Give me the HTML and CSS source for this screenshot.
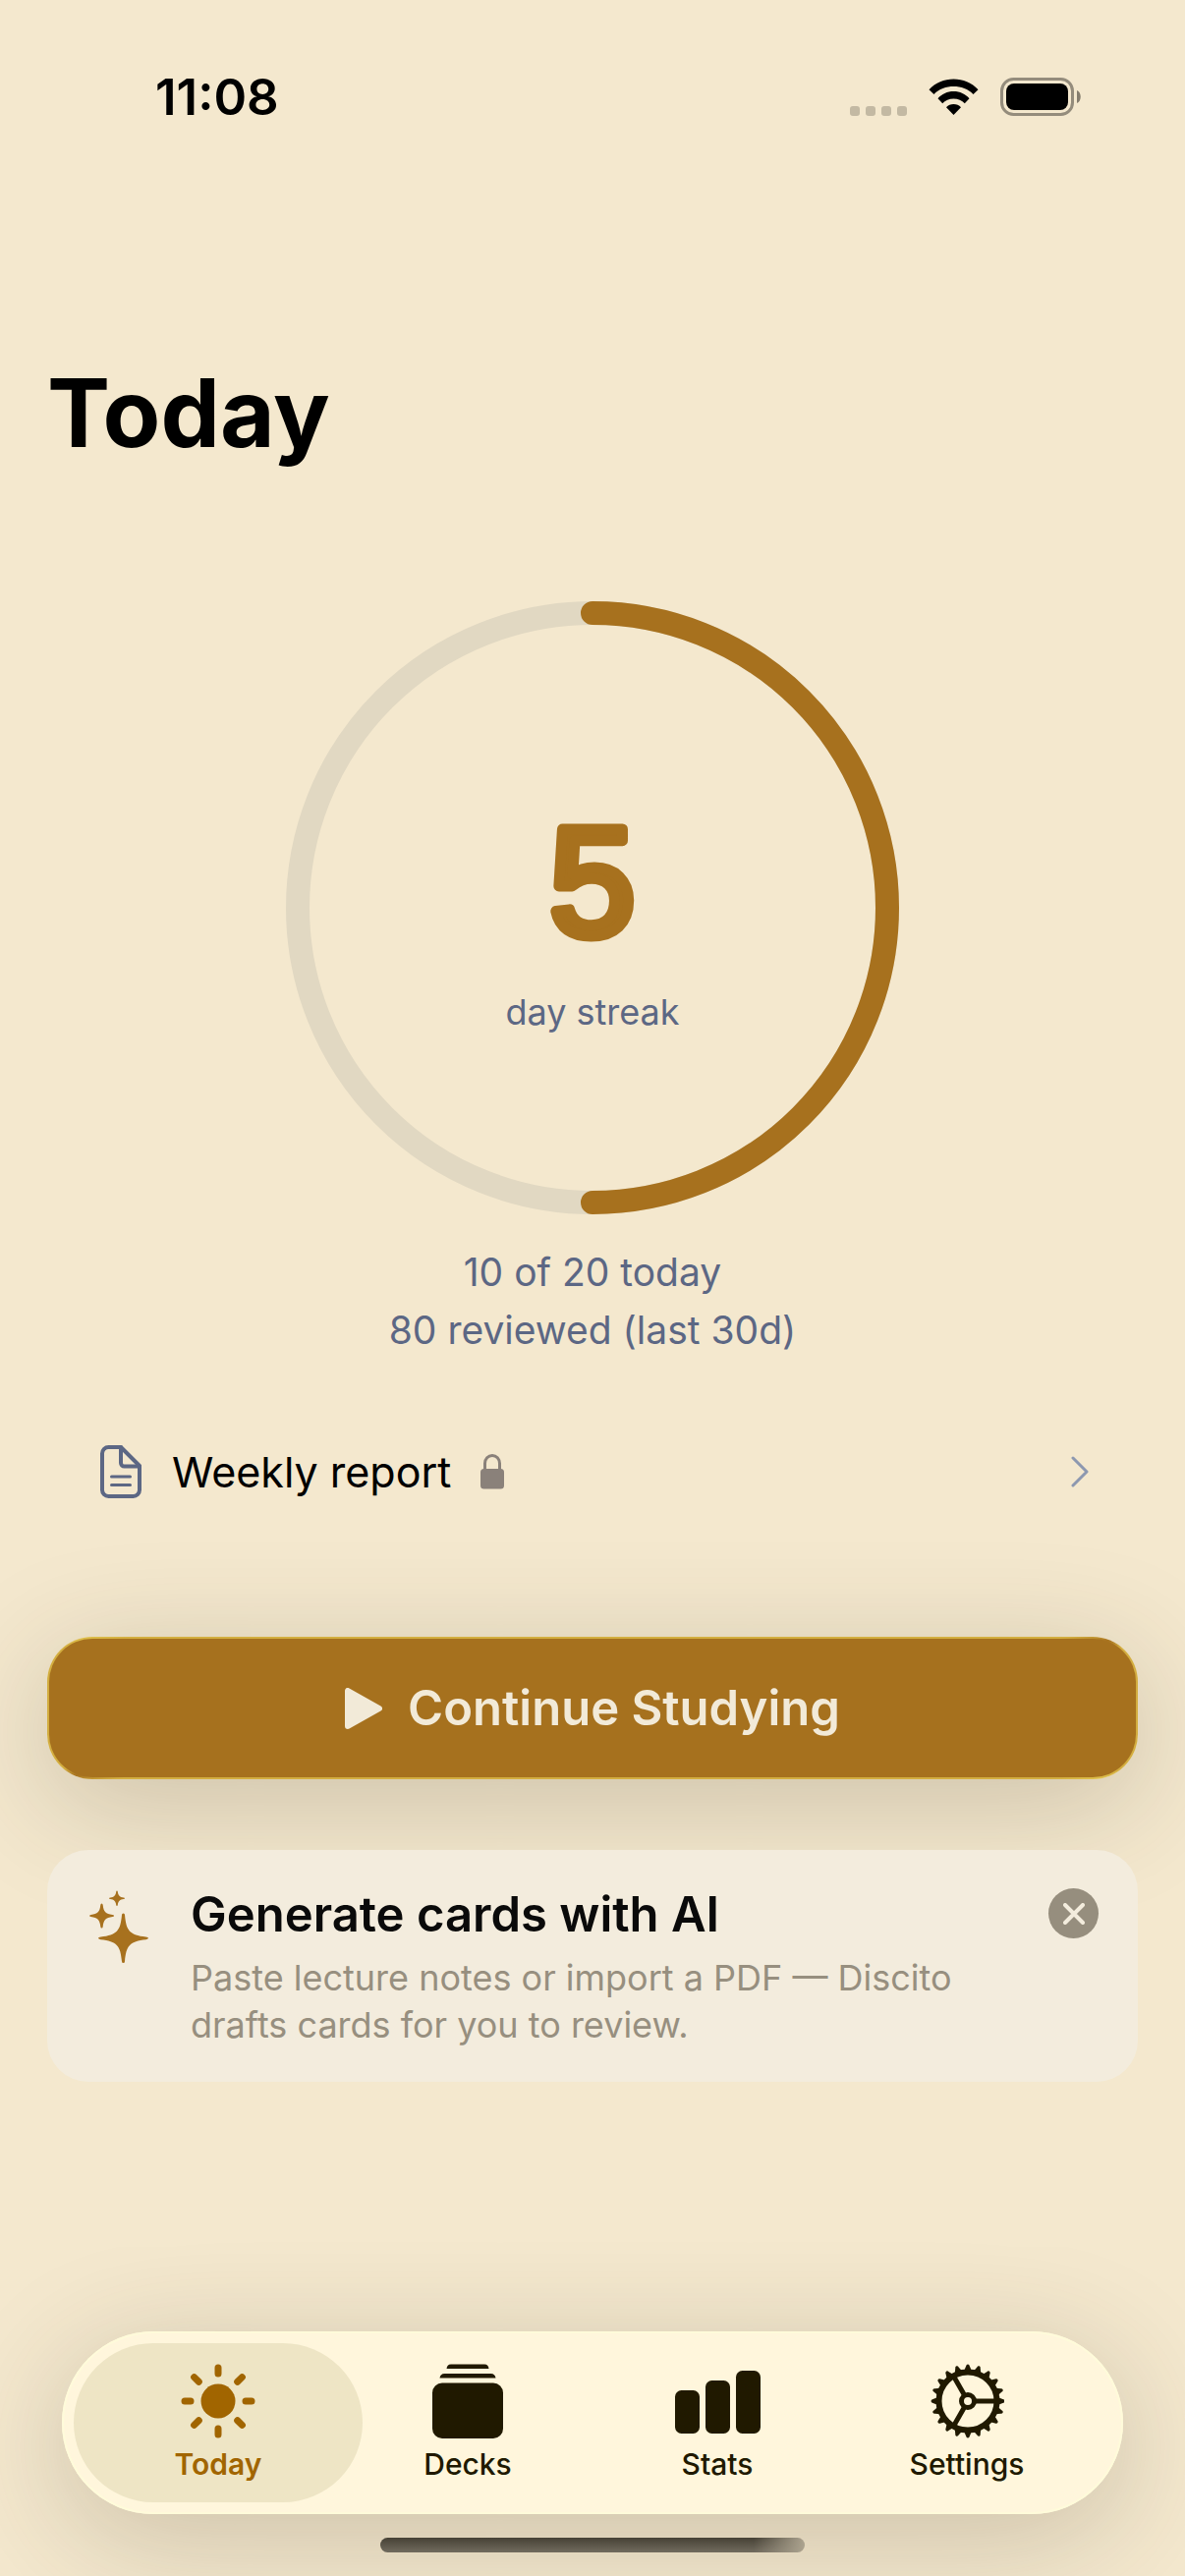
FILE: index.html
```html
<!DOCTYPE html>
<html lang="en">
<head>
  <meta charset="utf-8">
  <meta name="viewport" content="width=device-width">
  <title>Today</title>
  <link rel="stylesheet" href="styles.css">
</head>
<body>
  <header class="status-bar">
    <span class="time">11:08</span>
    <div class="status-icons">
      <svg class="signal" width="58" height="10" viewBox="0 0 58 10">
        <rect width="10" height="10" rx="3"/>
        <rect x="16" width="10" height="10" rx="3"/>
        <rect x="32" width="10" height="10" rx="3"/>
        <rect x="48" width="10" height="10" rx="3"/>
      </svg>
      <svg width="51" height="38" viewBox="0 0 51 38">
        <path d="M0.5 11.2C7 4.200 16 0.500 25.500 0.500S44 4.200 50.500 11.200L45.500 16C40.500 10.500 33 8 25.500 8S10.500 10.500 5.500 16Z"/>
        <path d="M9.500 20.200C13.500 15.700 19 13 25.500 13S37.500 15.700 41.500 20.200L36.800 25.200C34 22.200 30 20.500 25.500 20.500S17 22.200 14.200 25.200Z"/>
        <path d="M18 29.200C20 27 22.500 26 25.500 26S31 27 33 29.200L25.500 37Z"/>
      </svg>
      <svg width="83" height="39" viewBox="0 0 83 39">
        <rect class="battery-case" x="1.500" y="1.500" width="72" height="36" rx="12"/>
        <rect x="6" y="6" width="63" height="27" rx="8"/>
        <path class="battery-tip" d="M78 13C83 15 83 24 78 26Z"/>
      </svg>
    </div>
  </header>

  <main class="content">
    <h1 class="title">Today</h1>

    <section class="progress">
      <div class="ring">
        <svg class="ring-chart" viewBox="0 0 624 624">
          <circle class="ring-track" cx="312" cy="312" r="300"/>
          <path class="ring-value" d="M312 12A300 300 0 0 1 312 612"/>
          <text class="streak-number" x="312" y="339">5</text>
          <text class="streak-label" x="312" y="431">day streak</text>
        </svg>
      </div>
      <p class="progress-text">10 of 20 today<br>80 reviewed (last 30d)</p>
    </section>

    <a class="report" href="#report">
      <svg class="report-icon" width="42" height="54" viewBox="0 0 42 54">
        <path d="M8.500 2H21L40 21V45.500A6.500 6.500 0 0 1 33.500 52H8.500A6.500 6.500 0 0 1 2 45.500V8.500A6.500 6.500 0 0 1 8.500 2Z"/>
        <path d="M21 2V18A3.500 3.500 0 0 0 24.500 21.500H40"/>
        <path class="thin" d="M11.500 32H30.500M11.500 40.500H30.500"/>
      </svg>
      <span>Weekly report</span>
      <svg class="lock" width="24" height="36" viewBox="0 0 24 36">
        <rect y="15" width="24" height="20.500" rx="3.500"/>
        <path d="M4.500 16V9.500A7.500 8 0 0 1 19.500 9.500V16"/>
      </svg>
      <svg class="chevron" width="18" height="32" viewBox="0 0 18 32">
        <path d="M2 2L16 16L2 30"/>
      </svg>
    </a>

    <button class="study-button" type="button">
      <svg width="38" height="42" viewBox="0 0 38 42">
        <path d="M3 3V39L35 21Z"/>
      </svg>
      Continue Studying
    </button>

    <section class="card">
      <svg class="sparkles" width="60" height="74" viewBox="0 0 60 74">
        <path d="M34.500 23.500Q36 23.500 36 25C37.500 41.500 41 45.500 57.500 47.500Q60 48 60 48.700T57.500 50.200C41 52 37.500 56 36 72.500Q36 74 34.500 74T33 72.500C31.500 56 28 52 11.500 50.200Q9 49.500 9 48.700T11.500 47.500C28 45.500 31.500 41.500 33 25Q33 23.500 34.500 23.500Z"/>
        <path d="M12.500 13.500Q13.500 13.500 13.700 15C14.500 22 16.500 24 23.500 25Q25 25.200 25 26T23.500 27C16.500 28 14.500 30 13.700 37Q13.500 38.500 12.500 38.500T11.300 37C10.500 30 8.500 28 1.500 27Q0 26.700 0 26T1.500 25C8.500 24 10.500 22 11.300 15Q11.500 13.500 12.500 13.500Z"/>
        <path d="M28 0.500Q28.600 0.500 28.800 1.500C29.300 5.500 31 7 34.800 7.500Q36 7.700 36 8.200T34.800 9C31 9.500 29.300 11 28.800 15Q28.600 16 28 16T27.200 15C26.700 11 25 9.500 21.200 9Q20 8.700 20 8.200T21.200 7.500C25 7 26.700 5.500 27.200 1.500Q27.400 0.500 28 0.500Z"/>
      </svg>
      <div class="card-text">
        <h2>Generate cards with AI</h2>
        <p>Paste lecture notes or import a PDF — Discito drafts cards for you to review.</p>
      </div>
      <button class="close" type="button" aria-label="Close">
        <svg width="22" height="22" viewBox="0 0 22 22">
          <path d="M2 2L20 20M20 2L2 20"/>
        </svg>
      </button>
    </section>
  </main>

  <nav class="tab-bar">
    <a class="tab active" href="#today">
      <svg width="76" height="76" viewBox="0 0 76 76">
        <circle cx="38" cy="38" r="17.500"/>
        <path class="rays" d="M38 4V10M38 66V72M4 38H10M66 38H72M13.600 13.600L18.300 18.300M57.700 57.700L62.400 62.400M13.600 62.400L18.300 57.700M57.700 18.300L62.400 13.600"/>
      </svg>
      Today
    </a>
    <a class="tab" href="#decks">
      <svg width="76" height="76" viewBox="0 0 76 76">
        <path d="M16.500 5C17 2 18 0.500 21 0.500H55C58 0.500 59 2 59.500 5Z"/>
        <path d="M9.500 14.500C10 11.500 11.500 10 14.500 10H61.500C64.500 10 66 11.500 66.500 14.500Z"/>
        <rect x="2" y="19.500" width="72" height="56.500" rx="10"/>
      </svg>
      Decks
    </a>
    <a class="tab" href="#stats">
      <svg width="88" height="76" viewBox="0 0 88 76">
        <rect x="1" y="27" width="25" height="44" rx="6.500"/>
        <rect x="32" y="17" width="25" height="54" rx="6.500"/>
        <rect x="63" y="7" width="25" height="64" rx="6.500"/>
      </svg>
      Stats
    </a>
    <a class="tab" href="#settings">
      <svg class="gear" width="76" height="76" viewBox="-39 -38 76 76">
        <defs>
          <path id="tooth" d="M31 -3.800L35.500 -1.900Q37.500 -1.500 37.500 0T35.500 1.900L31 3.800Z"/>
          <g id="teeth">
            <use href="#tooth"/>
            <use href="#tooth" transform="rotate(18)"/>
            <use href="#tooth" transform="rotate(36)"/>
            <use href="#tooth" transform="rotate(54)"/>
            <use href="#tooth" transform="rotate(72)"/>
          </g>
        </defs>
        <use href="#teeth"/>
        <use href="#teeth" transform="rotate(90)"/>
        <use href="#teeth" transform="rotate(180)"/>
        <use href="#teeth" transform="rotate(270)"/>
        <circle class="line" r="29.500"/>
        <circle class="line hub" r="6.500"/>
        <path class="line spokes" d="M8 0H28M-4 -7L-14 -24.500M-4 7L-14 24.500"/>
      </svg>
      Settings
    </a>
  </nav>
  <div class="home-indicator"></div>
</body>
</html>
```
FILE: styles.css
```css
* {
  box-sizing: border-box;
}

body {
  display: flex;
  flex-direction: column;
  min-height: 100vh;
  margin: 0;
  background-color: #f4e8ce;
  color: #000;
  font-family: Inter, "Liberation Sans", sans-serif;
}

h1, h2, p {
  margin: 0;
}

a {
  color: inherit;
  text-decoration: none;
}

button {
  border: 0;
  font-family: inherit;
}

svg {
  flex: none;
}

/* Status bar */
.status-bar {
  display: flex;
  align-items: center;
  justify-content: space-between;
  height: 196px;
  padding: 0 105px 0 158px;
}

.time {
  font-size: 51px;
  font-weight: 600;
}

.status-icons {
  display: flex;
  align-items: flex-end;
  gap: 22px;
}

.signal {
  fill: #c3b9a3;
}

.battery-case {
  fill: none;
  stroke: #948c7c;
  stroke-width: 3;
}

.battery-tip {
  fill: #857d6e;
}

/* Content */
.content {
  display: flex;
  flex-direction: column;
  padding: 164px 48px 0;
}

.title {
  font-size: 96px;
  font-weight: 700;
  line-height: 120px;
}

.progress {
  display: flex;
  flex-direction: column;
  align-items: center;
  gap: 29px;
  margin-top: 132px;
}

.ring {
  width: 624px;
}

.ring-chart {
  display: block;
  width: 100%;
}

.ring-track {
  fill: none;
  stroke: #e1d8c2;
  stroke-width: 24;
}

.ring-value {
  fill: none;
  stroke: #a7711e;
  stroke-width: 24;
  stroke-linecap: round;
}

/* The round stroke softens the corners of the digit */
.streak-number {
  fill: #a7711e;
  stroke: #a7711e;
  stroke-width: 11;
  stroke-linejoin: round;
  font-family: "Liberation Sans", sans-serif;
  font-size: 156px;
  text-anchor: middle;
}

.streak-label {
  fill: #5c6784;
  font-size: 36px;
  text-anchor: middle;
}

.progress-text {
  color: #5c6784;
  font-size: 39px;
  line-height: 59px;
  text-align: center;
}

.report {
  display: flex;
  align-items: center;
  margin-top: 88px;
  padding: 0 50px 0 54px;
  font-size: 43px;
  line-height: 54px;
}

.report-icon {
  margin-right: 31px;
  fill: none;
  stroke: #5c6784;
  stroke-width: 4;
  stroke-linejoin: round;
  stroke-linecap: round;
}

.report-icon .thin {
  stroke-width: 3;
}

.lock {
  margin-left: 30px;
  fill: #8a817a;
}

.lock path {
  fill: none;
  stroke: #8a817a;
  stroke-width: 3;
}

.chevron {
  margin-left: auto;
  fill: none;
  stroke: #8d98b0;
  stroke-width: 3;
  stroke-linecap: round;
  stroke-linejoin: round;
}

.study-button {
  display: flex;
  align-items: center;
  justify-content: center;
  gap: 26px;
  height: 145px;
  margin-top: 141px;
  border: 2px solid transparent;
  border-radius: 46px;
  background:
    linear-gradient(#a6711e, #a6711e) padding-box,
    linear-gradient(to bottom right, #e8cf55, #d3ae40 4%, #d3ae40 47%, #a6711e 50%, #d3ae40 53%, #d3ae40 96%, #e8cf55) border-box;
  box-shadow: 0 24px 120px rgba(60, 50, 30, 0.22);
  color: #f2ead8;
  font-size: 49px;
  font-weight: 600;
}

.study-button path {
  fill: #f2ead8;
  stroke: #f2ead8;
  stroke-width: 6;
  stroke-linejoin: round;
}

.card {
  display: flex;
  align-items: flex-start;
  margin-top: 72px;
  padding: 36px 40px 34px 43px;
  border-radius: 42px;
  background-color: #f3ecdd;
}

.sparkles {
  margin-top: 5px;
  margin-right: 43px;
  fill: #a7711e;
}

.card-text {
  flex: 1;
  padding-right: 40px;
}

.card-text h2 {
  margin-bottom: 10px;
  color: #0a0a0a;
  font-size: 49px;
  font-weight: 600;
  line-height: 60px;
}

.card-text p {
  color: #978f7f;
  font-size: 36px;
  line-height: 48px;
}

.close {
  display: flex;
  align-items: center;
  justify-content: center;
  width: 51px;
  height: 51px;
  margin-top: 3px;
  padding: 0;
  border-radius: 50%;
  background-color: #968e7e;
}

.close path {
  stroke: #f3ecdd;
  stroke-width: 4;
  stroke-linecap: round;
}

/* Tab bar */
.tab-bar {
  display: flex;
  margin: auto 63px 0;
  padding: 0 32px;
  border-radius: 93px;
  background-color: #fff6dc;
  box-shadow: inset 0 0 0 2px #fffbda, 0 24px 120px rgba(60, 50, 30, 0.22);
}

.tab {
  position: relative;
  display: flex;
  flex: 1;
  flex-direction: column;
  align-items: center;
  gap: 8px;
  padding: 33px 0;
  color: #201900;
  font-size: 30px;
  font-weight: 500;
  line-height: 36px;
}

.tab svg {
  position: relative;
  fill: currentColor;
}

.active {
  z-index: 0;
  color: #a16500;
  font-weight: 600;
}

/* Highlight is wider than the tab itself */
.active::before {
  content: "";
  position: absolute;
  inset: 12px -20px;
  z-index: -1;
  border-radius: 81px;
  background-color: #eee5c5;
}

.rays {
  stroke: currentColor;
  stroke-width: 7;
  stroke-linecap: round;
}

.gear .line {
  fill: none;
  stroke: currentColor;
  stroke-width: 6;
}

.gear .hub,
.gear .spokes {
  stroke-width: 5;
}

.home-indicator {
  width: 432px;
  height: 15px;
  margin: 24px auto;
  border-radius: 8px;
  background:
    linear-gradient(to right, rgba(172, 163, 143, 0) 88%, #aca38f),
    linear-gradient(#464135, #716b5e);
}
```
